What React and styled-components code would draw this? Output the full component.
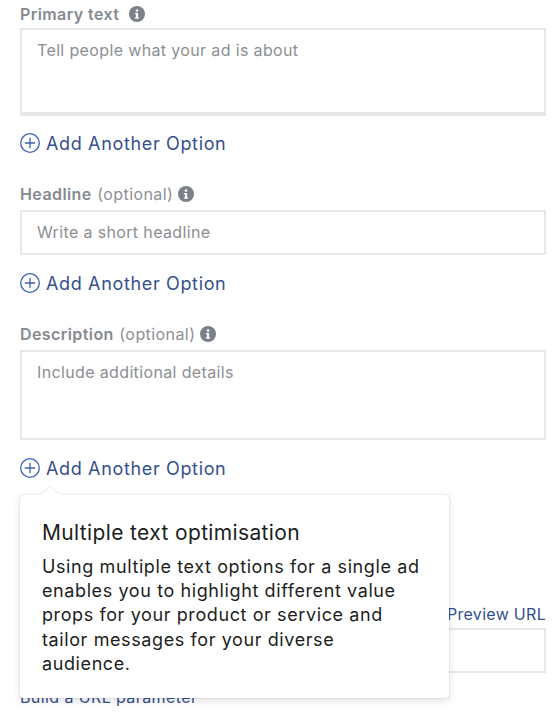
import React from "react";
import styled, { createGlobalStyle } from "styled-components";

const Global = createGlobalStyle`
  html, body { margin: 0; padding: 0; background: #fff; overflow: hidden; }
  * { box-sizing: border-box; }
`;
const Page = styled.div`
  position: relative;
  width: 556px;
  height: 718px;
  overflow: hidden;
  padding: 4px 10px 0 20px;
  font-family: Inter, "Liberation Sans", sans-serif;
`;
const Label = styled.div`
  display: flex;
  align-items: center;
  height: 20px;
  margin-top: ${(p) => p.$top || 0}px;
  font-size: 16px;
  letter-spacing: 0.42px;
  color: #8a8d91;
`;
const Strong = styled.span`
  font-weight: 600;
  color: #858a91;
`;
const Optional = styled.span`
  margin-left: 5.5px;
  color: #8d9095;
`;
const InfoWrap = styled.svg`
  width: 16px;
  height: 16px;
  margin-left: ${(p) => p.$gap}px;
  flex: none;
`;
const Field = styled.div`
  margin-top: ${(p) => p.$top}px;
  height: ${(p) => p.$h}px;
  border: 2px solid #e6e7e9;
  border-bottom-width: ${(p) => p.$bottom || 2}px;
  padding: ${(p) => p.$pad}px 15px 0;
  font-size: 16px;
  letter-spacing: 0.36px;
  line-height: 20px;
  color: #8c8e92;
`;
const AddRow = styled.div`
  display: flex;
  align-items: center;
  gap: 6px;
  height: 22px;
  margin-top: ${(p) => p.$top}px;
  font-size: 18px;
  letter-spacing: 0.65px;
  color: #34508f;
`;
const PlusIcon = styled.svg`
  width: 20px;
  height: 20px;
  flex: none;
`;
const LinkRow = styled.div`
  display: flex;
  justify-content: flex-end;
  margin-top: ${(p) => p.$top}px;
  height: 20px;
  font-size: 16px;
  line-height: 20px;
  letter-spacing: 0.3px;
  color: #34508f;
`;
const BuildLink = styled.div`
  margin-top: 14px;
  font-size: 16px;
  line-height: 20px;
  letter-spacing: 0.4px;
  color: #34508f;
`;
const Popover = styled.div`
  position: absolute;
  left: 20px;
  top: 495px;
  width: 429px;
  height: 203px;
  padding: 26px 22px 0 22px;
  background: #fff;
  border-radius: 3px;
  box-shadow: 0 0 1px rgba(0, 0, 0, 0.4), 0 3px 9px rgba(0, 0, 0, 0.12);
  color: #1c1e21;
  &::before {
    content: "";
    position: absolute;
    left: 23px;
    top: -7px;
    width: 14px;
    height: 14px;
    background: #fff;
    transform: scaleY(0.8) rotate(45deg);
    box-shadow: -1px -1px 1px rgba(0, 0, 0, 0.08);
  }
`;
const PopTitle = styled.div`
  position: relative;
  font-size: 21px;
  line-height: 24px;
  letter-spacing: 0.36px;
`;
const PopBody = styled.div`
  position: relative;
  margin-top: 10px;
  font-size: 18px;
  line-height: 24.2px;
  letter-spacing: 0.6px;
`;

const Info = ({ gap }) => (
  <InfoWrap $gap={gap} viewBox="0 0 16 16">
    <circle cx="8" cy="8" r="8" fill="#7b808a" />
    <rect x="6.9" y="7" width="2.2" height="5.4" fill="#fff" />
    <rect x="5.9" y="7" width="2" height="1.2" fill="#fff" />
    <rect x="5.9" y="11.4" width="4.2" height="1.2" fill="#fff" />
    <circle cx="8" cy="4.6" r="1.3" fill="#fff" />
  </InfoWrap>
);

const Add = ({ top }) => (
  <AddRow $top={top}>
    <PlusIcon viewBox="0 0 20 20">
      <circle cx="10" cy="10" r="9.3" fill="none" stroke="#3d63b3" strokeWidth="1.3" />
      <path d="M10 4.8v10.4M4.8 10h10.4" fill="none" stroke="#3d63b3" strokeWidth="1.3" />
    </PlusIcon>
    Add Another Option
  </AddRow>
);

export default function App() {
  return (
    <Page>
      <Global />
      <Label>
        <Strong>Primary text</Strong>
        <Info gap={10} />
      </Label>
      <Field $top={4} $h={88} $bottom={4} $pad={10}>Tell people what your ad is about</Field>
      <Add top={16} />
      <Label $top={30}>
        <Strong>Headline</Strong>
        <Optional>(optional)</Optional>
        <Info gap={5} />
      </Label>
      <Field $top={6} $h={45} $pad={10}>Write a short headline</Field>
      <Add top={17} />
      <Label $top={30}>
        <Strong>Description</Strong>
        <Optional>(optional)</Optional>
        <Info gap={5} />
      </Label>
      <Field $top={6} $h={90} $pad={10}>Include additional details</Field>
      <Add top={17} />
      <LinkRow $top={125}>Preview URL</LinkRow>
      <Field $top={4} $h={45} $pad={10} />
      <BuildLink>Build a URL parameter</BuildLink>
      <Popover>
        <PopTitle>Multiple text optimisation</PopTitle>
        <PopBody>
          Using multiple text options for a single ad enables you to highlight different value props for your product or service and tailor messages for your diverse audience.
        </PopBody>
      </Popover>
    </Page>
  );
}
